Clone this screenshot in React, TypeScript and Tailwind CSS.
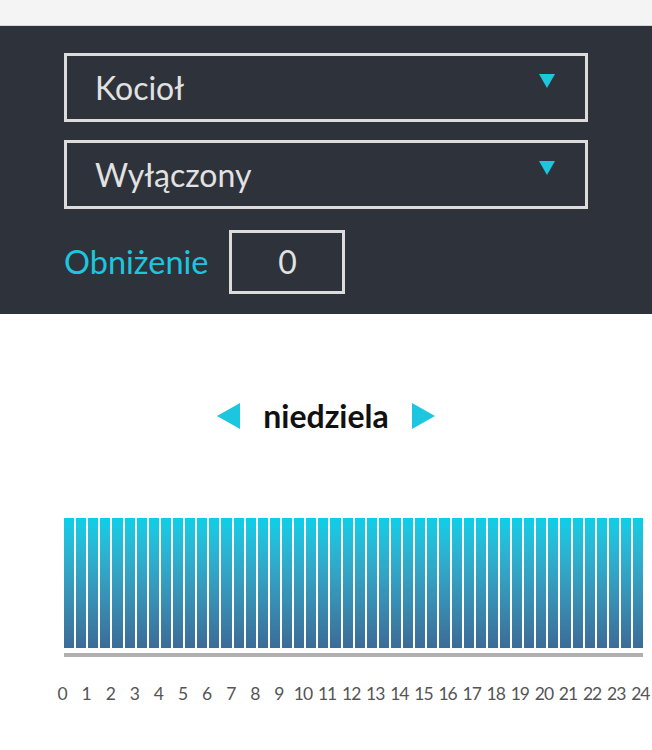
import React from 'react';

const hours = Array.from({ length: 25 }, (_, i) => i);
const slots = Array.from({ length: 48 }, (_, i) => i);

const Caret = () => (
    <svg width="16" height="14" viewBox="0 0 16 14" className="shrink-0">
        <polygon points="0,0 16,0 8,14" fill="#1cc6df" />
    </svg>
);

const Select: React.FC<{ value: string }> = ({ value }) => (
    <div className="w-[524px] h-[69px] border-[3px] border-[#dcdcdc] flex items-start justify-between pl-[28px] pr-[30px]">
        <span className="text-[32px] leading-[69px] text-[#e2e2e2] -mt-[3px]">{value}</span>
        <div className="pt-[18px]">
            <Caret />
        </div>
    </div>
);

const App: React.FC = () => {
    return (
        <div className="w-[652px] h-[750px] bg-white overflow-hidden" style={{ fontFamily: 'Lato, "Open Sans", sans-serif' }}>
            {/* Top strip */}
            <div className="h-[26px] bg-[#f4f4f4] border-b border-[#d8d8d8]" />

            {/* Settings panel */}
            <div className="bg-[#2e323a] pl-[64px] pt-[27px] pb-[20px] flex flex-col">
                <Select value="Kocioł" />
                <div className="h-[18px]" />
                <Select value="Wyłączony" />
                <div className="flex items-center mt-[21px]">
                    <span className="text-[32.5px] text-[#1cc6df] leading-none">Obniżenie</span>
                    <div className="ml-[21px] w-[116px] h-[64px] border-[3px] border-[#dcdcdc] flex items-center justify-center text-[32px] text-[#e2e2e2]">
                        0
                    </div>
                </div>
            </div>

            {/* Day switcher */}
            <div className="flex items-center justify-center gap-[23px] mt-[80px] h-[44px]">
                <svg width="23" height="26" viewBox="0 0 23 26">
                    <polygon points="23,0 23,26 0,13" fill="#1cc6df" />
                </svg>
                <span className="text-[32px] font-bold text-[#111] leading-none">niedziela</span>
                <svg width="23" height="26" viewBox="0 0 23 26">
                    <polygon points="0,0 23,13 0,26" fill="#1cc6df" />
                </svg>
            </div>

            {/* Chart */}
            <div className="mt-[80px] ml-[64px] w-[579px]">
                <div className="flex gap-[2px] h-[130px]">
                    {slots.map((s) => (
                        <div key={s} className="flex-1 bg-gradient-to-b from-[#08cfe8] to-[#3b6c97]" />
                    ))}
                </div>
                <div className="h-[4px] bg-[#b0b0b0] mt-[5px]" />
            </div>
            <div className="flex ml-[50px] mt-[28px]">
                {hours.map((h) => (
                    <span key={h} className="w-[24.1px] shrink-0 text-center text-[17.5px] text-[#555] leading-none tracking-[-1px]">
                        {h}
                    </span>
                ))}
            </div>
        </div>
    );
};

export default App;
